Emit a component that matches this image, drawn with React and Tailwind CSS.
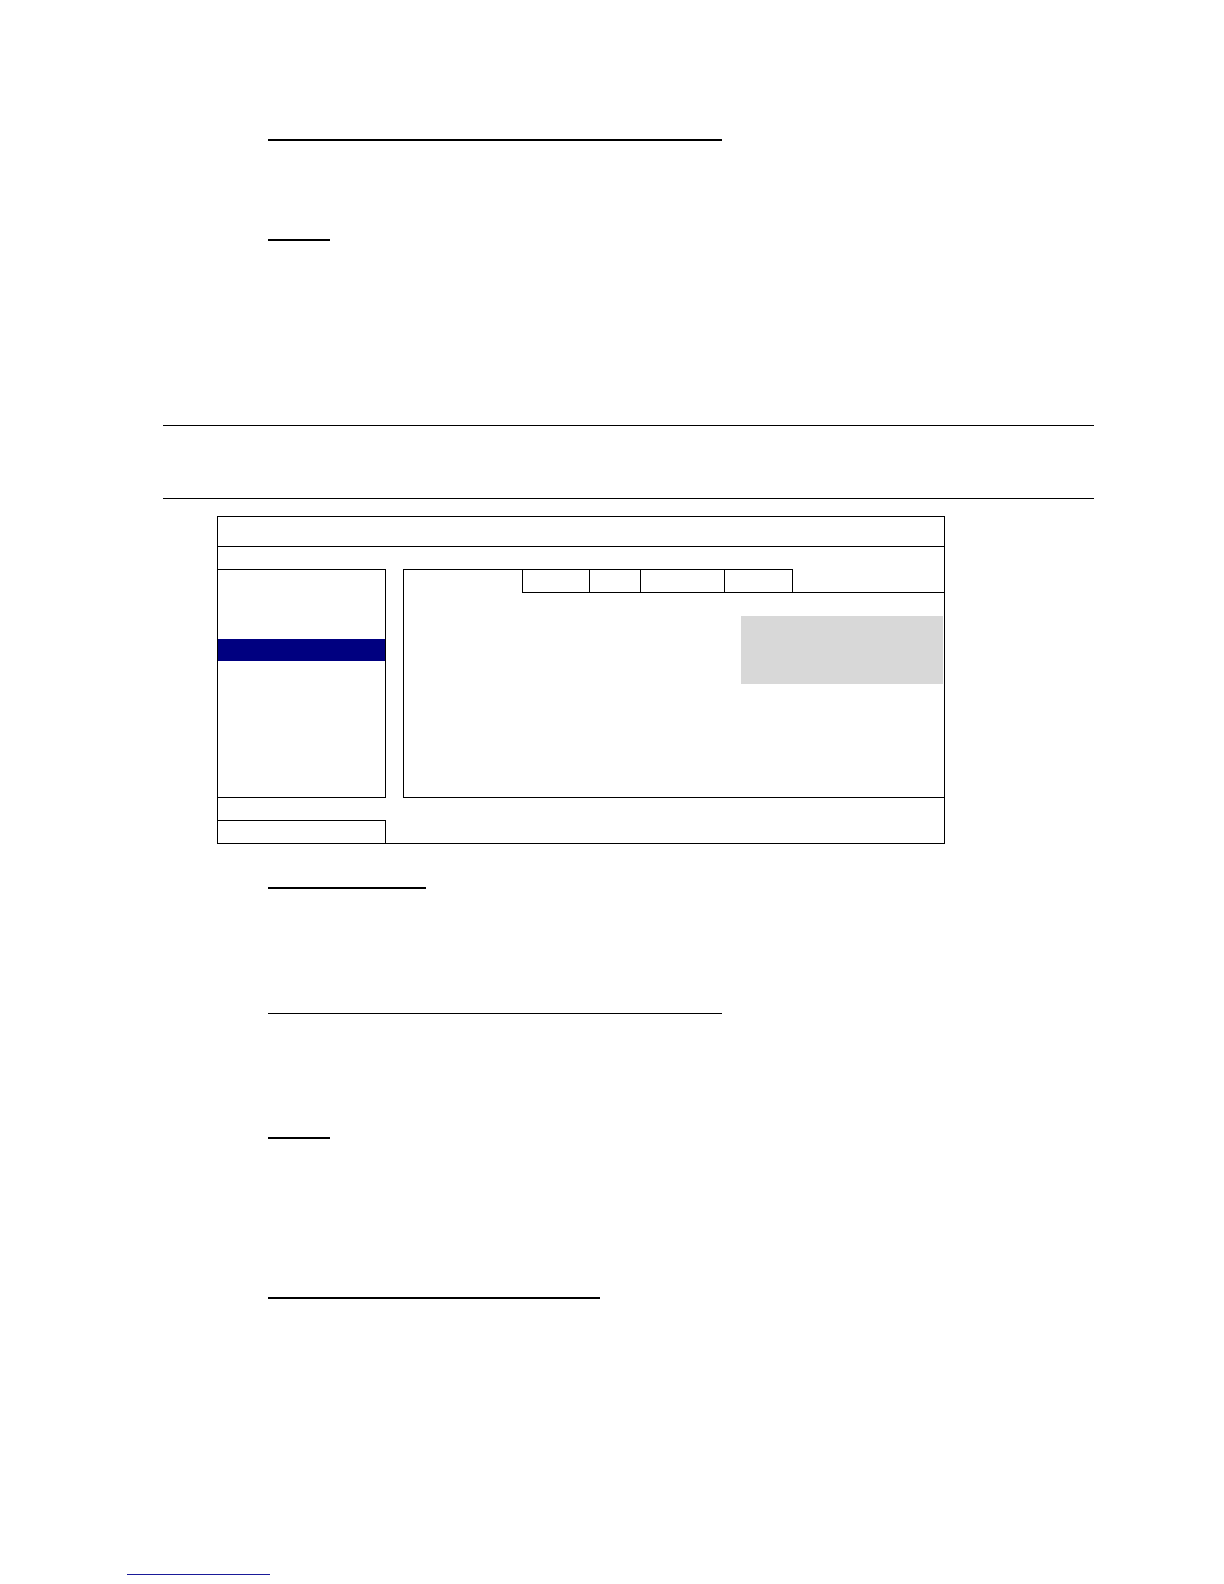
export default function App() {
  const tabs = [
    { w: 'w-[67px]', last: false },
    { w: 'w-[51px]', last: false },
    { w: 'w-[84px]', last: false },
    { w: 'w-[69px]', last: true },
  ]

  return (
    <div className="w-[1224px] min-h-[1584px] bg-white flex flex-col" style={{ fontFamily: '"Liberation Sans", Arial, sans-serif' }}>
      {/* Section headings (underlines) */}
      <div className="mt-[139px] ml-[268px] w-[454px] h-[2px] bg-black" />
      <div className="mt-[98px] ml-[268px] w-[62px] h-[2px] bg-black" />

      {/* Note rule lines */}
      <div className="mt-[184px] ml-[163px] w-[931px] h-px bg-black" />
      <div className="mt-[72px] ml-[163px] w-[931px] h-px bg-black" />

      {/* Menu diagram */}
      <div className="mt-[17px] ml-[217px] w-[728px] border border-black flex flex-col">
        <div className="h-[30px] border-b border-black" />
        <div className="h-[22px]" />

        <div className="flex h-[229px]">
          {/* Left menu */}
          <div className="w-[168px] border-t border-r border-b border-black flex flex-col">
            <div className="h-[69px]" />
            <div className="h-[22px] bg-[#000080]" />
          </div>

          {/* Right panel */}
          <div className="ml-[17px] w-[541px] flex flex-col">
            <div className="flex h-[24px]">
              <div className="w-[119px] border-t border-l border-black" />
              {tabs.map((t, i) => (
                <div
                  key={i}
                  className={`${t.w} border-t border-b border-l border-black ${t.last ? 'border-r' : ''}`}
                />
              ))}
              <div className="w-[151px] border-b border-black" />
            </div>
            <div className="h-[205px] border-l border-b border-black">
              <div className="mt-[23px] ml-[337px] w-[202px] h-[68px] bg-[#d8d8d8]" />
            </div>
          </div>
        </div>

        <div className="h-[22px]" />
        <div className="w-[168px] h-[23px] border-t border-r border-black" />
      </div>

      {/* More headings */}
      <div className="mt-[43px] ml-[268px] w-[158px] h-[2px] bg-black" />
      <div className="mt-[124px] ml-[268px] w-[454px] h-px bg-black" />
      <div className="mt-[123px] ml-[268px] w-[62px] h-[2px] bg-black" />
      <div className="mt-[158px] ml-[268px] w-[332px] h-[2px] bg-black" />

      {/* Footer link underline */}
      <div className="mt-[275px] ml-[127px] w-[143px] h-px bg-[#1a1a99]" />
    </div>
  )
}
